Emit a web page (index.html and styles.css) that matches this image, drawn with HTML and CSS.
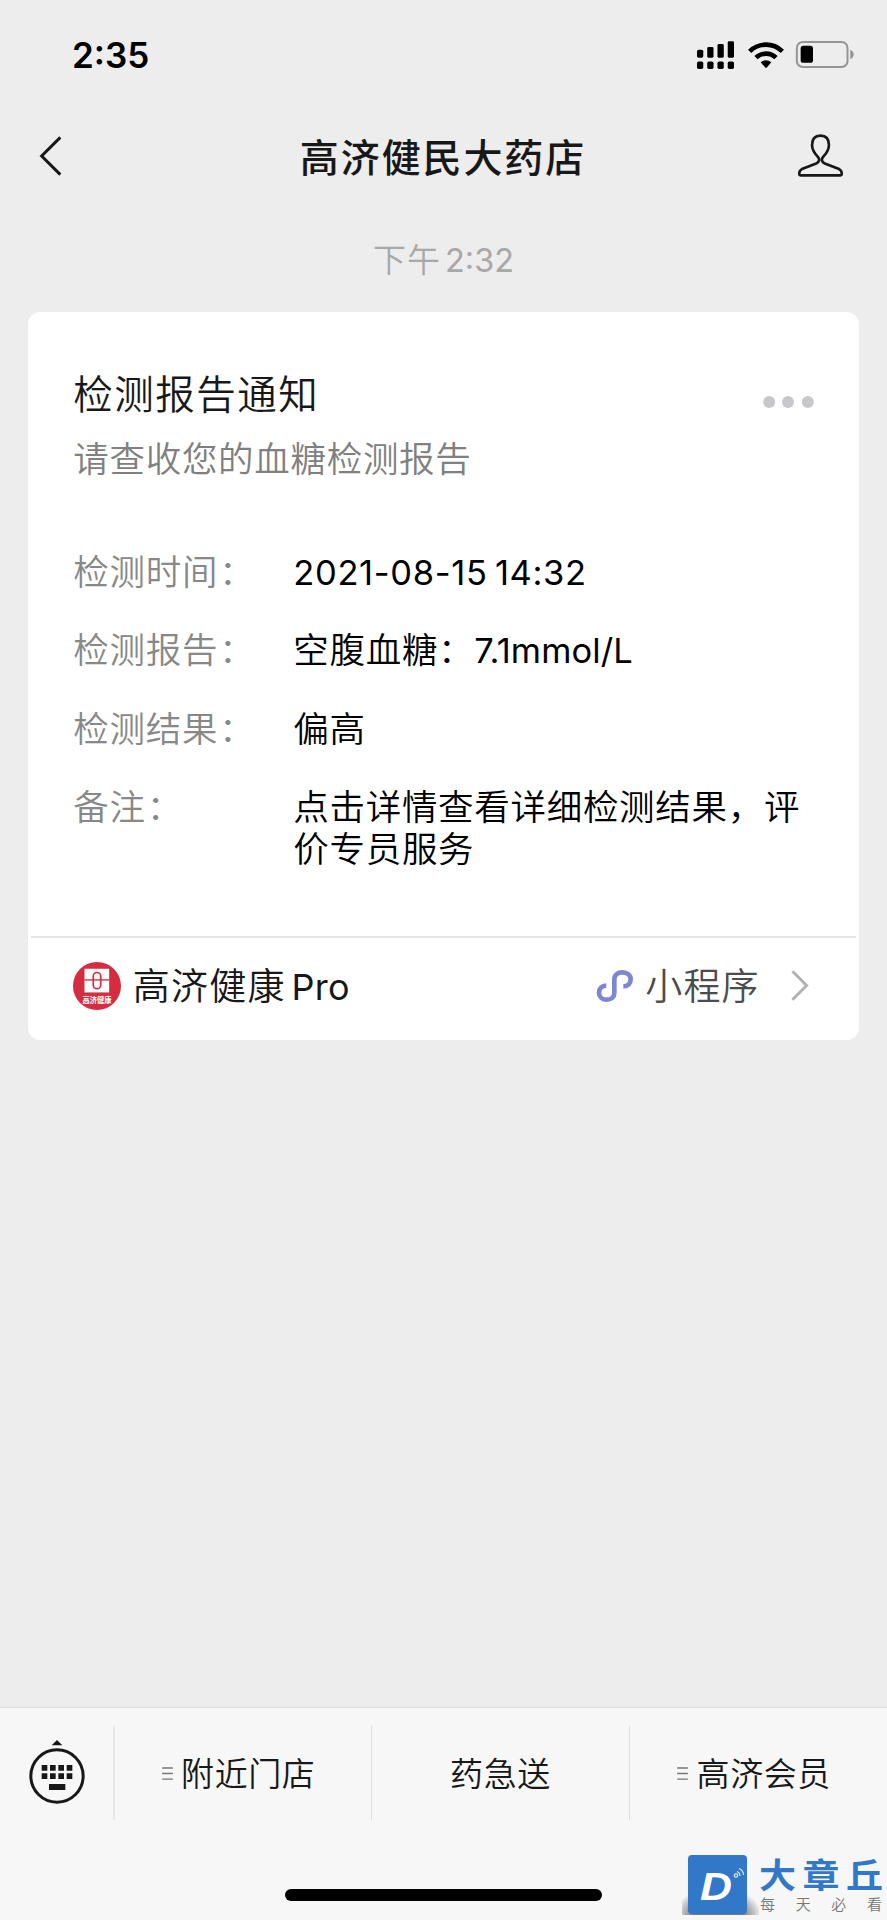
FILE: index.html
```html
<!DOCTYPE html>
<html lang="zh-CN">
<head>
<meta charset="utf-8">
<title>高济健民大药店</title>
<link rel="stylesheet" href="styles.css">
</head>
<body>
<div class="screen">
  <header class="status">
    <span class="clock">2:35</span>
    <div class="status-icons">
      <svg class="signal" viewBox="0 0 112 84">
        <rect x="0" y="26" width="19" height="24" rx="5"/><rect x="31" y="18" width="19" height="32" rx="4"/><rect x="62" y="9" width="19" height="41" rx="4"/><rect x="93" y="0" width="19" height="50" rx="4"/>
        <rect x="0" y="62" width="19" height="22" rx="5"/><rect x="31" y="62" width="19" height="22" rx="5"/><rect x="62" y="62" width="19" height="22" rx="5"/><rect x="93" y="62" width="19" height="22" rx="5"/>
      </svg>
      <svg class="wifi" viewBox="0 0 108 78">
        <path class="arc" d="M5 28A70 70 0 0 1 103 28M24 47A43 43 0 0 1 84 47"/>
        <path d="M38 61Q54 48 70 61L57 76Q54 79 51 76Z"/>
      </svg>
      <svg class="battery" viewBox="0 0 174 80">
        <rect class="case" x="2.5" y="2.5" width="152" height="75" rx="18"/>
        <rect x="14" y="14" width="37" height="51" rx="8"/>
        <path class="cap" d="M163 26Q173 31 173 40T163 54Z"/>
      </svg>
    </div>
  </header>
  <nav class="navbar">
    <svg class="back" viewBox="0 0 66 120"><path d="M61 4L5 60L61 116"/></svg>
    <h1 class="nav-title">高济健民大药店</h1>
    <svg class="person" viewBox="0 0 146 136"><path d="M73 8C55 8 47.500 20 47.500 36C47.500 53 56 62 64 71C71 78 71 87 60 92L17 109Q9 113 9 121V124Q9 128 14 128H132Q137 128 137 124V121Q137 113 129 109L86 92C75 87 75 78 82 71C90 62 98.500 53 98.500 36C98.500 20 91 8 73 8Z"/></svg>
  </nav>
  <p class="stamp">下午<span class="stamp-num">2:32</span></p>
  <main class="card">
    <div class="card-body">
      <div class="card-head">
        <h2 class="card-title">检测报告通知</h2>
        <svg class="more" viewBox="0 0 152 36"><circle cx="18" cy="18" r="18"/><circle cx="74.500" cy="18" r="18"/><circle cx="134" cy="18" r="18"/></svg>
      </div>
      <p class="card-sub">请查收您的血糖检测报告</p>
      <dl class="fields">
        <dt>检测时间<span class="colon">：</span></dt><dd class="date">2021-08-15 14:32</dd>
        <dt>检测报告<span class="colon">：</span></dt><dd>空腹血糖：<span class="amount">7.1mmol/L</span></dd>
        <dt>检测结果<span class="colon">：</span></dt><dd>偏高</dd>
        <dt>备注<span class="colon">：</span></dt><dd>点击详情查看详细检测结果，评价专员服务</dd>
      </dl>
    </div>
    <footer class="card-foot">
      <svg class="brand" viewBox="0 0 142 142">
        <circle class="brand-bg" cx="71" cy="71" r="71"/>
        <rect class="brand-box" x="34" y="20" width="73" height="70"/>
        <path class="brand-line" d="M34 53H107"/>
        <rect class="brand-pill" x="60" y="31" width="22" height="48" rx="11"/>
        <path class="brand-line" d="M60 53H82"/>
        <text class="brand-text" x="71" y="121" textLength="86" lengthAdjust="spacingAndGlyphs">高济健康</text>
      </svg>
      <span class="brand-name">高济健康<span class="pro">Pro</span></span>
      <svg class="mini" viewBox="0 0 108 96"><path d="M28 47C14 47 6 56 6 68C6 80 16 89 29 89C43 89 52 81 52 68V28C52 15 62 7 76 7C91 7 101 16 101 28C101 40 93 49 79 49"/></svg>
      <span class="mini-label">小程序</span>
      <svg class="chevron" viewBox="0 0 54 94"><path d="M4 4L47 47L4 90"/></svg>
    </footer>
  </main>
  <div class="toolbar">
    <div class="menu">
      <div class="keys">
        <svg class="keyboard" viewBox="0 0 168 192">
          <path d="M68 16L84 0L100 16Z"/>
          <circle class="ring" cx="84" cy="108" r="78.500"/>
          <path d="M38 75h17v17h-17zM63 75h17v17h-17zM88 75h17v17h-17zM113 75h17v17h-17zM38 100h17v17h-17zM63 100h17v17h-17zM88 100h17v17h-17zM113 100h17v17h-17zM60 132h49v18h-49z"/>
        </svg>
      </div>
      <div class="item has-sub"><svg class="lines" viewBox="0 0 33 40"><path d="M0 3H33M0 20H33M0 37H33"/></svg><span>附近门店</span></div>
      <div class="item"><span>药急送</span></div>
      <div class="item has-sub"><svg class="lines" viewBox="0 0 33 40"><path d="M0 3H33M0 20H33M0 37H33"/></svg><span>高济会员</span></div>
    </div>
    <div class="home"></div>
  </div>
  <aside class="watermark">
    <div class="wm-shade">
      <svg class="wm-logo" viewBox="0 0 59 59">
        <rect class="wm-tile" width="59" height="59" rx="4"/>
        <text class="wm-d" x="12" y="44.500" textLength="32" lengthAdjust="spacingAndGlyphs">D</text>
        <circle class="wm-wave" cx="48" cy="20.500" r="1.700"/>
        <path class="wm-wave" d="M49 16.500Q52 17.500 52 21M51 13.500Q55.500 15.500 55.500 20"/>
      </svg>
    </div>
    <div class="wm-words">
      <div class="wm-name"><span>大</span><span>章</span><span>丘</span></div>
      <div class="wm-tag"><span>每</span><span>天</span><span>必</span><span>看</span></div>
    </div>
  </aside>
</div>
</body>
</html>
```
FILE: styles.css
```css
* { box-sizing: border-box; margin: 0; padding: 0; }
body { background: #ededed; }
svg { display: block; flex: none; overflow: visible; }
.screen {
  position: relative;
  display: flex;
  flex-direction: column;
  width: 887px;
  height: 1920px;
  overflow: hidden;
  background: #ededed;
  color: #000;
  font-family: Inter, "Noto Sans CJK SC", sans-serif;
  font-weight: 350;
  white-space: nowrap;
}
.status {
  display: flex;
  align-items: center;
  justify-content: space-between;
  height: 109px;
  padding: 0 33.5px 0 72px;
}
.clock { font-size: 35px; font-weight: 600; }
.status-icons { display: flex; align-items: center; }
.signal { width: 37px; height: 28px; margin-right: 14px; }
.wifi { width: 36px; height: 26px; margin-right: 12px; }
.arc { fill: none; stroke: #000; stroke-width: 14; }
.battery { width: 58px; height: 27px; }
.case { fill: none; stroke: #949494; stroke-width: 6; }
.cap { fill: #949494; }
.navbar {
  display: grid;
  grid-template-columns: 62px 1fr 91px;
  align-items: center;
  height: 94px;
  padding-left: 40px;
}
.back { width: 22px; height: 40px; }
.back path { fill: none; stroke: #181818; stroke-width: 9; }
.nav-title { padding: 0 1px 3px 0; margin-left: -62px; margin-right: -51px; text-align: center; font-size: 39px; font-weight: 500; letter-spacing: 1.9px; color: #181818; }
.person { width: 49px; height: 45px; margin-bottom: 2px; }
.person path { fill: none; stroke: #181818; stroke-width: 8; }
.stamp {
  height: 109px;
  padding-top: 32px;
  line-height: 50px;
  font-size: 33px;
  letter-spacing: 1px;
  text-align: center;
  color: #a8a8a8;
}
.stamp-num { margin-left: 4px; font-size: 32.5px; font-weight: 400; letter-spacing: 0; }
.card {
  display: flex;
  flex-direction: column;
  width: 830.5px;
  height: 728px;
  margin-left: 28.3px;
  border-radius: 12px;
  background: #fff;
}
.card-body { flex: 1; padding: 49px 45px 0 45px; }
.card-head { display: flex; justify-content: space-between; align-items: center; height: 60px; }
.card-title { font-size: 39.5px; font-weight: 350; letter-spacing: 1.5px; color: #181818; }
.more { width: 51px; height: 12px; margin-top: 22px; fill: #c7c7cc; }
.card-sub { margin-top: 14px; line-height: 50px; font-size: 35.5px; letter-spacing: .7px; color: #808080; }
.fields {
  display: grid;
  grid-template-columns: 220px 1fr;
  row-gap: 36.3px;
  margin-top: 67px;
  line-height: 42px;
  font-size: 35.5px;
  letter-spacing: .7px;
}
.fields dt { color: #888; }
.colon { margin-left: 1px; }
.fields dd { white-space: normal; width: 516px; }
.fields .date { font-size: 34.5px; font-weight: 400; letter-spacing: .65px; word-spacing: -3px; }
.amount { font-size: 34.5px; font-weight: 400; letter-spacing: .1px; }
.card-foot {
  display: flex;
  align-items: center;
  height: 104px;
  margin: 0 3px;
  padding: 0 47px 7px 41.5px;
  border-top: 2px solid #e5e5e5;
}
.brand { width: 48px; height: 48px; }
.brand-bg { fill: #d32d3f; }
.brand-box { fill: #fff; }
.brand-line { stroke: #d32d3f; stroke-width: 4; }
.brand-pill { fill: #fff; stroke: #d32d3f; stroke-width: 5; }
.brand-text { fill: #fff; font-size: 23px; font-weight: 700; text-anchor: middle; }
.brand-name { margin-left: 12px; padding-bottom: 3px; font-size: 37px; letter-spacing: 1.2px; color: #181818; }
.pro { margin-left: 6px; letter-spacing: .2px; font-size: 36px; font-weight: 400; }
.mini { width: 36px; height: 32px; margin-left: auto; margin-right: 12px; }
.mini path { fill: none; stroke: #7b87d3; stroke-width: 14; stroke-linecap: butt; }
.mini-label { padding-bottom: 3px; font-size: 37px; letter-spacing: 1.2px; color: #4c4c4c; }
.chevron { width: 18px; height: 31px; margin-left: 31px; }
.chevron path { fill: none; stroke: #b2b2b2; stroke-width: 9; }
.toolbar { margin-top: auto; height: 213px; border-top: 1px solid #dcdcdc; background: #f7f7f7; }
.menu { display: grid; grid-template-columns: 115px 256px 258px 258px; height: 94px; margin-top: 18px; }
.keys { padding: 14px 0 0 29px; border-right: 2px solid #e8e8e8; }
.keyboard { width: 56px; height: 64px; fill: #181818; }
.ring { fill: none; stroke: #181818; stroke-width: 9; }
.item {
  display: flex;
  align-items: center;
  justify-content: center;
  gap: 8.5px;
  padding-bottom: 2px;
  font-size: 33px;
  letter-spacing: .6px;
  color: #181818;
}
.has-sub { padding-right: 9px; }
.item + .item { border-left: 1px solid #dedede; }
.lines { width: 11px; height: 13px; margin-top: 2px; }
.lines path { stroke: #777; stroke-width: 4; }
.home { width: 317px; height: 12px; margin: 69px auto 0; border-radius: 6px; background: #000; }
.watermark { position: absolute; right: 0; bottom: 5px; display: flex; width: 205px; height: 60px; }
.wm-shade { width: 77px; height: 60px; padding: 0 6px; background: radial-gradient(ellipse 44px 28px at 36px 60px, #777 55%, #f7f7f700 100%); }
.wm-logo { width: 59px; height: 59px; }
.wm-tile { fill: #3178c8; }
.wm-d { fill: #fff; font: italic 700 38px "Liberation Sans", sans-serif; }
.wm-wave { fill: none; stroke: #dce9f7; stroke-width: 1.2; }
.wm-words { width: 124px; }
.wm-name { display: flex; justify-content: space-between; height: 41px; line-height: 41px; font-size: 37px; font-weight: 700; color: #3178c8; transform: scaleY(.92); }
.wm-tag { display: flex; justify-content: space-between; padding: 0 1px; line-height: 18px; font-size: 15px; color: #777; }
```
